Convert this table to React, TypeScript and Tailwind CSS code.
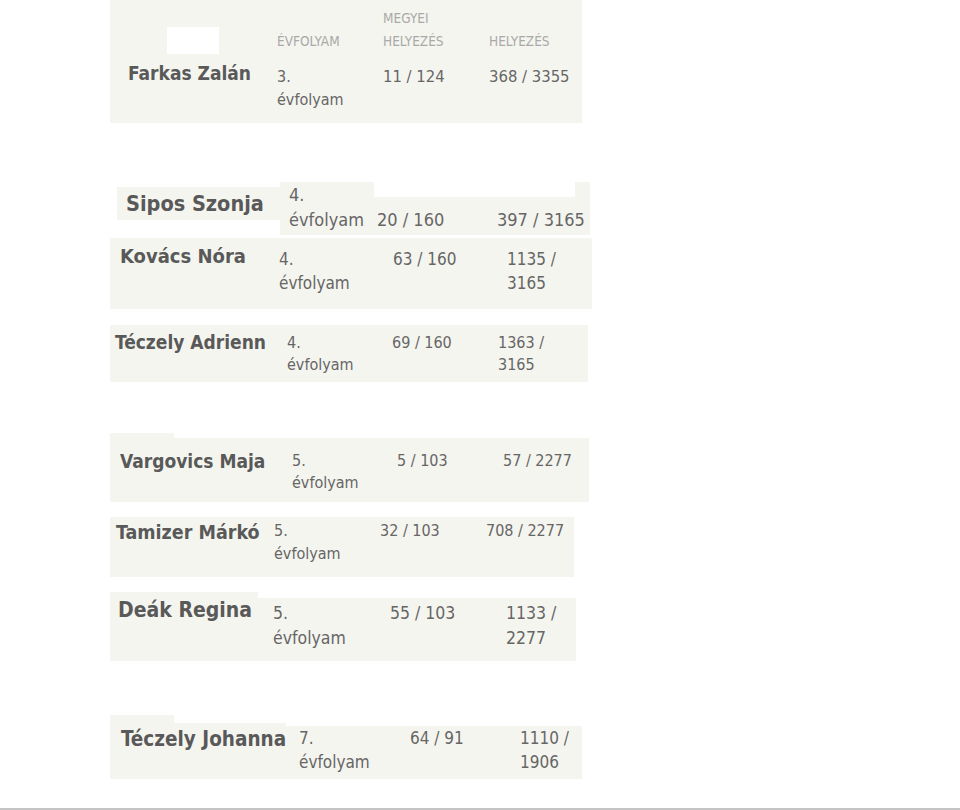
const Bg = "bg-[#f5f5ef]";

export default function App() {
  return (
    <div className="h-[810px] overflow-hidden border-b-2 border-[#c4c4c4] bg-white pl-[110px] font-['DejaVu_Sans_Condensed','DejaVu_Sans',sans-serif] text-[#666666]">
      {/* Farkas Zalán with header */}
      <div className={`flex h-[123px] w-[472px] ${Bg}`}>
        <div className="w-[167px]">
          <div className="ml-[57px] mt-[27px] h-[27px] w-[52px] bg-white" />
          <div className="mt-[7px] pl-[18px] text-[19px] font-bold leading-[24px] text-[#595959]">Farkas Zalán</div>
        </div>
        <div className="w-[106px]">
          <div className="flex h-[53px] flex-col justify-end text-[13.5px] leading-[23px] text-[#a9a9a9]">ÉVFOLYAM</div>
          <div className="mt-[12px] text-[16px] leading-[23px]">
            3.
            <br />
            évfolyam
          </div>
        </div>
        <div className="w-[106px]">
          <div className="flex h-[53px] flex-col justify-end text-[13.5px] leading-[23px] text-[#a9a9a9]">
            <div>MEGYEI</div>
            <div>HELYEZÉS</div>
          </div>
          <div className="mt-[12px] text-[16.5px] leading-[23px]">11 / 124</div>
        </div>
        <div className="flex-1">
          <div className="flex h-[53px] flex-col justify-end text-[13.5px] leading-[23px] text-[#a9a9a9]">HELYEZÉS</div>
          <div className="mt-[12px] text-[16.5px] leading-[23px]">368 / 3355</div>
        </div>
      </div>

      {/* Sipos Szonja */}
      <div className="mt-[59px] flex items-start">
        <div className={`ml-[7px] mt-[5px] h-[33px] w-[163px] pl-[9px] text-[21.5px] font-bold leading-[33px] text-[#595959] ${Bg}`}>Sipos Szonja</div>
        <div className={`h-[53px] w-[94px] pl-[9px] text-[18px] leading-[25px] ${Bg}`}>
          4.
          <br />
          évfolyam
        </div>
        <div className="flex w-[216px] flex-col">
          <div className="flex h-[15px]">
            <div className="w-[201px]" />
            <div className={`flex-1 ${Bg}`} />
          </div>
          <div className={`flex h-[38px] text-[18px] leading-[25px] ${Bg}`}>
            <div className="w-[123px] pl-[3px] pt-[10px]">20 / 160</div>
            <div className="whitespace-nowrap pt-[10px]">397 / 3165</div>
          </div>
        </div>
      </div>

      {/* Kovács Nóra */}
      <div className={`mt-[3px] flex h-[71px] w-[482px] text-[17px] leading-[24px] ${Bg}`}>
        <div className="w-[169px] pl-[10px] pt-[6px] text-[20px] font-bold text-[#595959]">Kovács Nóra</div>
        <div className="w-[114px] pt-[9px]">
          4.
          <br />
          évfolyam
        </div>
        <div className="w-[114px] pt-[9px]">63 / 160</div>
        <div className="pt-[9px]">
          1135 /
          <br />
          3165
        </div>
      </div>

      {/* Téczely Adrienn */}
      <div className={`mt-[16px] flex h-[57px] w-[478px] text-[16px] leading-[22px] ${Bg}`}>
        <div className="w-[177px] pl-[5px] pt-[6px] text-[19px] font-bold text-[#595959]">Téczely Adrienn</div>
        <div className="w-[105px] pt-[7px]">
          4.
          <br />
          évfolyam
        </div>
        <div className="w-[106px] pt-[7px]">69 / 160</div>
        <div className="pt-[7px]">
          1363 /
          <br />
          3165
        </div>
      </div>

      {/* Vargovics Maja */}
      <div className={`mt-[51px] h-[5px] w-[64px] ${Bg}`} />
      <div className={`flex h-[64px] w-[479px] text-[16px] leading-[22px] ${Bg}`}>
        <div className="w-[182px] pl-[10px] pt-[12px] text-[19px] font-bold text-[#595959]">Vargovics Maja</div>
        <div className="w-[105px] pt-[12px]">
          5.
          <br />
          évfolyam
        </div>
        <div className="w-[106px] pt-[12px]">5 / 103</div>
        <div className="pt-[12px]">57 / 2277</div>
      </div>

      {/* Tamizer Márkó */}
      <div className={`mt-[15px] flex h-[60px] w-[464px] text-[16px] leading-[23px] ${Bg}`}>
        <div className="w-[164px] pl-[6px] pt-[5px] text-[19.5px] font-bold leading-[22px] text-[#595959]">Tamizer Márkó</div>
        <div className="w-[106px] pt-[2px]">
          5.
          <br />
          évfolyam
        </div>
        <div className="w-[106px] pt-[2px]">32 / 103</div>
        <div className="pt-[2px]">708 / 2277</div>
      </div>

      {/* Deák Regina */}
      <div className="mt-[15px] flex items-start">
        <div className={`h-[69px] w-[148px] pl-[8px] pt-[6px] text-[21px] font-bold leading-[25px] text-[#595959] ${Bg}`}>Deák Regina</div>
        <div className={`mt-[6px] flex h-[63px] w-[318px] text-[17.5px] leading-[25px] ${Bg}`}>
          <div className="w-[132px] pl-[15px] pt-[3px]">
            5.
            <br />
            évfolyam
          </div>
          <div className="w-[116px] pt-[3px]">55 / 103</div>
          <div className="pt-[3px]">
            1133 /
            <br />
            2277
          </div>
        </div>
      </div>

      {/* Téczely Johanna */}
      <div className={`mt-[54px] h-[8px] w-[64px] ${Bg}`} />
      <div className={`h-[3px] w-[176px] ${Bg}`} />
      <div className={`flex h-[53px] w-[472px] text-[17px] leading-[24px] ${Bg}`}>
        <div className="w-[189px] pl-[11px] pt-[1px] text-[20.5px] font-bold text-[#595959]">Téczely Johanna</div>
        <div className="w-[111px]">
          7.
          <br />
          évfolyam
        </div>
        <div className="w-[110px]">64 / 91</div>
        <div>
          1110 /
          <br />
          1906
        </div>
      </div>
    </div>
  );
}
